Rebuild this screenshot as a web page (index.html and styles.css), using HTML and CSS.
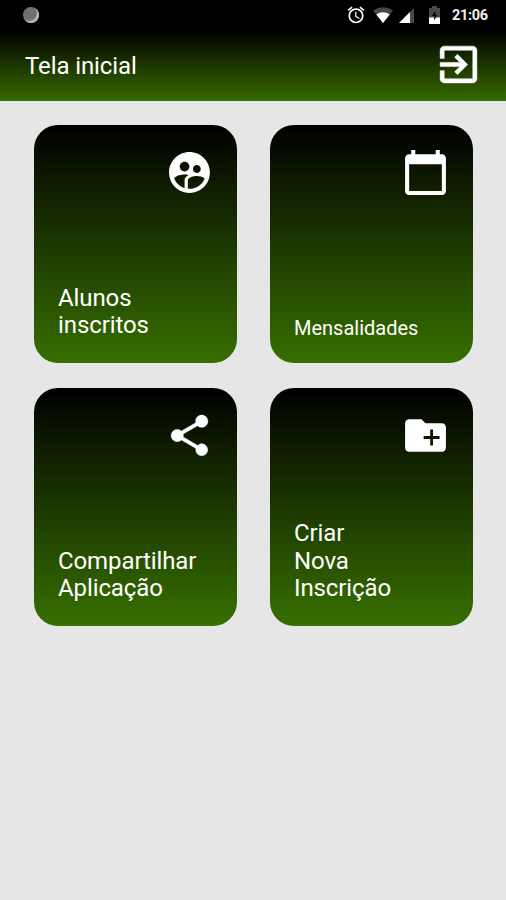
FILE: index.html
```html
<!DOCTYPE html>
<html lang="pt-BR">
<head>
<meta charset="utf-8">
<title>Tela inicial</title>
<link rel="stylesheet" href="styles.css">
</head>
<body>
<div class="status">
  <span class="notif"></span>
  <svg class="alarm" viewBox="0 0 24 24"><path d="M22 5.72l-4.6-3.86-1.29 1.53 4.6 3.86L22 5.72zM7.88 3.39L6.6 1.86 2 5.71l1.29 1.53 4.59-3.85zM12.5 8H11v6l4.75 2.85.75-1.23-4-2.37V8zM12 4c-4.97 0-9 4.03-9 9s4.02 9 9 9c4.97 0 9-4.03 9-9s-4.03-9-9-9zm0 16c-3.87 0-7-3.13-7-7s3.13-7 7-7 7 3.13 7 7-3.13 7-7 7z"/></svg>
  <svg class="wifi" viewBox="0 0 20 16"><path class="dim" d="M0 3.5Q10-3 20 3.5L10 16z"/><path d="M3.2 7.5Q10 3 16.8 7.5L10 16z"/></svg>
  <svg class="signal" viewBox="0 0 15 15"><path class="dim" d="M0 15L15 0v15z"/><path d="M0 15L11 4v11z"/></svg>
  <svg class="battery" viewBox="0 0 11 18"><path class="dim" d="M3 0h5v2h3v10H0V2h3z"/><path d="M0 11.5h11V18H0z"/><path class="bolt" d="M6.3 4.5L3 10h2.2v4.5L8.3 9H6.3z"/></svg>
  <span class="clock">21:06</span>
</div>
<header class="bar">
  <h1>Tela inicial</h1>
  <svg class="icon exit" viewBox="0 0 24 24"><path d="M10.09 15.59L11.5 17l5-5-5-5-1.41 1.41L12.67 11H3v2h9.67l-2.58 2.59zM19 3H5c-1.11 0-2 .9-2 2v4h2V5h14v14H5v-4H3v4c0 1.1.89 2 2 2h14c1.1 0 2-.9 2-2V5c0-1.1-.9-2-2-2z"/></svg>
</header>
<main class="grid">
  <section class="card">
    <svg class="icon" viewBox="0 0 24 24"><path d="M11.99 2c-5.52 0-10 4.48-10 10s4.48 10 10 10 10-4.48 10-10-4.48-10-10-10zm3.61 6.34c1.07 0 1.93.86 1.93 1.93s-.86 1.93-1.93 1.93-1.93-.86-1.93-1.93c-.01-1.07.86-1.93 1.93-1.93zm-6-1.58c1.3 0 2.36 1.06 2.36 2.36s-1.06 2.36-2.36 2.36-2.36-1.06-2.36-2.36c0-1.31 1.05-2.36 2.36-2.36zm0 9.13v3.75c-2.4-.75-4.3-2.6-5.14-4.96 1.05-1.12 3.67-1.69 5.14-1.69.53 0 1.2.08 1.9.22-1.64.87-1.9 2.02-1.9 2.68zM11.99 20c-.27 0-.53-.01-.79-.04v-4.07c0-1.42 2.94-2.13 4.4-2.13 1.07 0 2.92.39 3.84 1.15-1.17 2.97-4.06 5.09-7.45 5.09z"/></svg>
    <p>Alunos<br>inscritos</p>
  </section>
  <section class="card">
    <svg class="icon" viewBox="0 0 24 24"><path d="M20 3h-1V1h-2v2H7V1H5v2H4c-1.1 0-2 .9-2 2v16c0 1.1.9 2 2 2h16c1.1 0 2-.9 2-2V5c0-1.1-.9-2-2-2zm0 18H4V8h16v13z"/></svg>
    <p class="small">Mensalidades</p>
  </section>
  <section class="card">
    <svg class="icon share" viewBox="0 0 24 24"><path d="M18 16.08c-.76 0-1.44.3-1.96.77L8.91 12.7c.05-.23.09-.46.09-.7s-.04-.47-.09-.7l7.05-4.11c.54.5 1.25.81 2.04.81 1.66 0 3-1.34 3-3s-1.34-3-3-3-3 1.34-3 3c0 .24.04.47.09.7L8.04 9.81C7.5 9.31 6.79 9 6 9c-1.66 0-3 1.34-3 3s1.34 3 3 3c.79 0 1.5-.31 2.04-.81l7.12 4.16c-.05.21-.08.43-.08.65 0 1.61 1.31 2.92 2.92 2.92s2.92-1.31 2.92-2.92-1.31-2.92-2.92-2.92z"/></svg>
    <p>Compartilhar<br>Aplicação</p>
  </section>
  <section class="card">
    <svg class="icon" viewBox="0 0 24 24"><path d="M20 6h-8l-2-2H4c-1.11 0-1.99.89-1.99 2L2 18c0 1.11.89 2 2 2h16c1.11 0 2-.89 2-2V8c0-1.11-.89-2-2-2zm-1.1 7.7h-3.2v3.2h-1.4v-3.2h-3.2v-1.4h3.2V9.1h1.4v3.2h3.2v1.4z"/></svg>
    <p>Criar<br>Nova<br>Inscrição</p>
  </section>
</main>
</body>
</html>
```
FILE: styles.css
```css
* { box-sizing: border-box; }
body {
  margin: 0;
  height: 900px;
  background: #e6e6e6;
  color: #fff;
  font-family: Roboto, "Liberation Sans", sans-serif;
}
svg { display: block; flex: none; fill: #fff; }
.status {
  display: flex;
  align-items: center;
  height: 30px;
  padding: 0 18px 0 23px;
  background: #000;
}
.notif {
  width: 16px;
  height: 16px;
  margin-right: auto;
  border-radius: 50%;
  background: #707070;
  box-shadow: inset -2px -2px 1px #bbb;
}
.dim { fill: #484848; }
.alarm { width: 20px; height: 20px; margin-right: 7px; }
.wifi { width: 20px; height: 16px; margin-right: 6px; }
.signal { width: 15px; height: 15px; margin-right: 15px; }
.battery { width: 11px; height: 18px; margin-right: 12px; }
.bolt { fill: #000; }
.clock {
  width: 36px;
  font-size: 14.5px;
  font-weight: 700;
  letter-spacing: -0.3px;
  color: #eee;
}
.bar {
  display: flex;
  align-items: center;
  justify-content: space-between;
  height: 71px;
  padding: 0 23px 0 25px;
  border-bottom: 1px solid #2b762b;
  background: linear-gradient(#000, #376a00);
}
h1 {
  margin: 0;
  padding-top: 2px;
  font-size: 24px;
  font-weight: 400;
  letter-spacing: -0.1px;
}
.icon { width: 49px; height: 49px; }
.exit {
  stroke: #fff;
  stroke-width: 0.25px;
  margin-bottom: 1px;
}
.share { stroke: #fff; stroke-width: 0.2px; }
.grid {
  display: grid;
  grid-template-columns: 203px 203px;
  grid-auto-rows: 238px;
  gap: 25px 33px;
  padding: 24px 0 0 34px;
}
.card {
  display: flex;
  flex-direction: column;
  justify-content: space-between;
  padding: 23px 23px 23.5px 24px;
  border-radius: 24px;
  background: linear-gradient(#000, #376f00);
}
.card .icon { align-self: flex-end; }
p {
  margin: 0;
  font-size: 24px;
  line-height: 27.5px;
  letter-spacing: -0.1px;
}
.small { font-size: 20px; line-height: 24px; letter-spacing: 0; }
```
